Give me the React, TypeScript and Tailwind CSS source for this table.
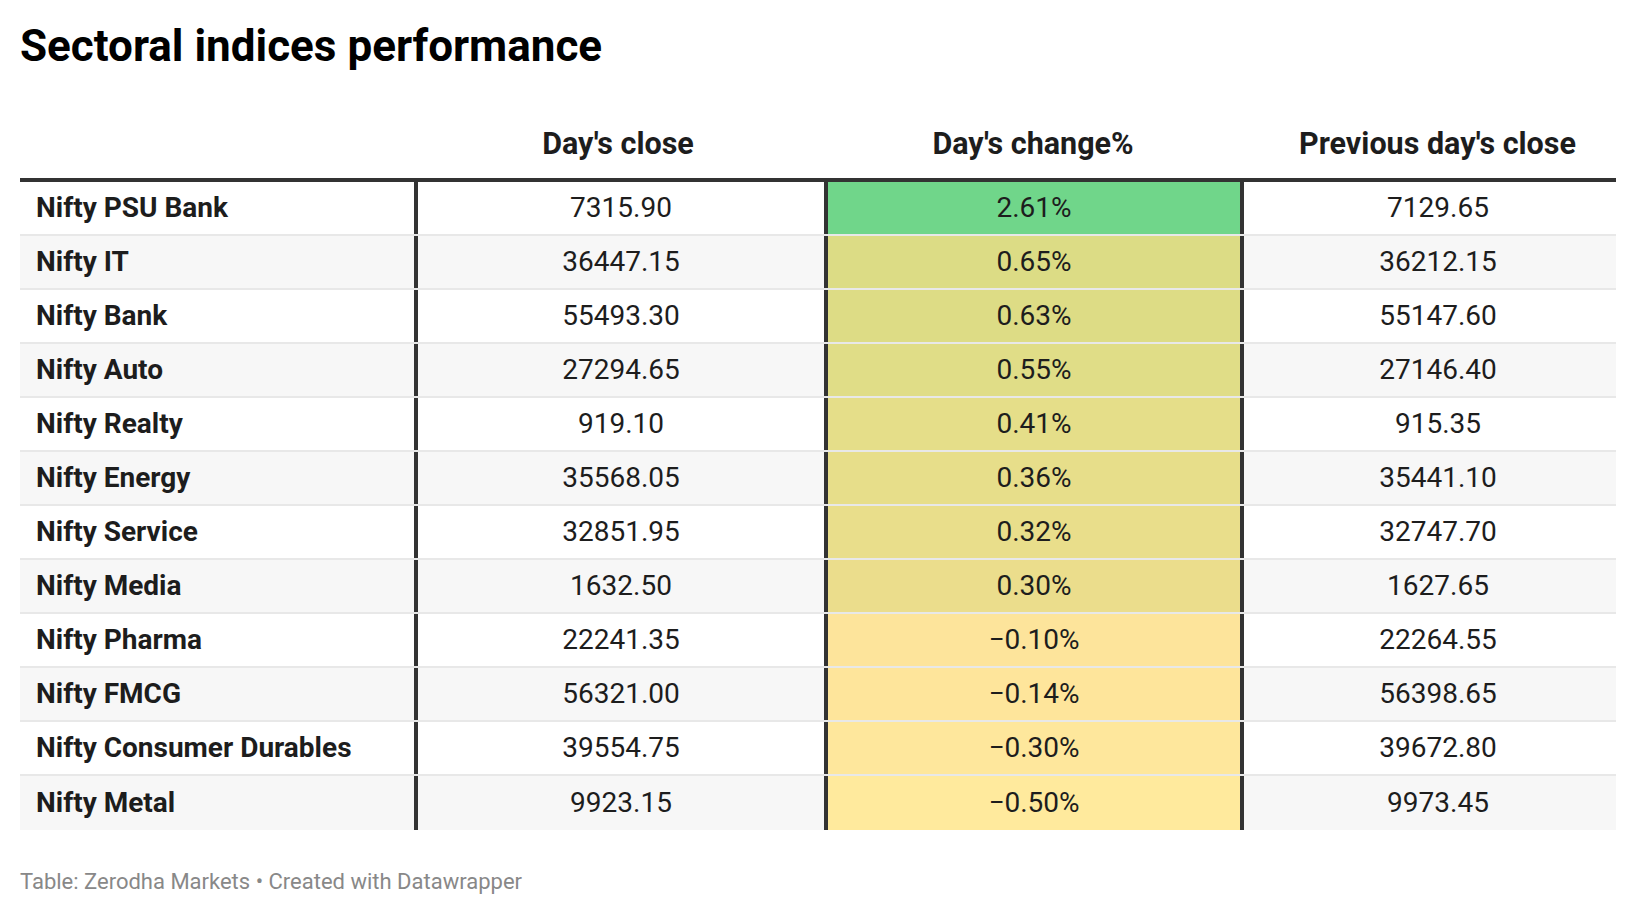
import React from "react";

type Row = { name: string; close: string; change: string; prev: string; bg: string };

const rows: Row[] = [
  { name: "Nifty PSU Bank", close: "7315.90", change: "2.61%", prev: "7129.65", bg: "#70d68a" },
  { name: "Nifty IT", close: "36447.15", change: "0.65%", prev: "36212.15", bg: "#dcdc85" },
  { name: "Nifty Bank", close: "55493.30", change: "0.63%", prev: "55147.60", bg: "#dddc85" },
  { name: "Nifty Auto", close: "27294.65", change: "0.55%", prev: "27146.40", bg: "#e0dd87" },
  { name: "Nifty Realty", close: "919.10", change: "0.41%", prev: "915.35", bg: "#e5de89" },
  { name: "Nifty Energy", close: "35568.05", change: "0.36%", prev: "35441.10", bg: "#e7de8a" },
  { name: "Nifty Service", close: "32851.95", change: "0.32%", prev: "32747.70", bg: "#e9de8b" },
  { name: "Nifty Media", close: "1632.50", change: "0.30%", prev: "1627.65", bg: "#ebdd8c" },
  { name: "Nifty Pharma", close: "22241.35", change: "\u22120.10%", prev: "22264.55", bg: "#fde49b" },
  { name: "Nifty FMCG", close: "56321.00", change: "\u22120.14%", prev: "56398.65", bg: "#fee59b" },
  { name: "Nifty Consumer Durables", close: "39554.75", change: "\u22120.30%", prev: "39672.80", bg: "#fee79c" },
  { name: "Nifty Metal", close: "9923.15", change: "\u22120.50%", prev: "9973.45", bg: "#ffea9d" },
];

export default function App() {
  return (
    <div
      className="w-[1636px] h-[914px] bg-white px-[20px] text-[#1d1d1d]"
      style={{ fontFamily: "Roboto, 'Liberation Sans', sans-serif" }}
    >
      <h1 className="pt-[20px] text-[44px] leading-[52px] font-bold text-black">Sectoral indices performance</h1>
      <div className="mt-[46px] flex h-[60px] items-center pb-[8px] text-[30.5px] font-bold">
        <div className="w-[393px]"></div>
        <div className="w-[410px] text-center">Day's close</div>
        <div className="w-[420px] text-center">Day's change%</div>
        <div className="flex-1 pl-[16px] text-center">Previous day's close</div>
      </div>
      <div className="border-t-4 border-[#333333]">
        {rows.map((r, i) => (
          <div
            key={r.name}
            className={`flex h-[54px] text-[28px] ${i % 2 === 1 ? "bg-[#f7f7f7]" : "bg-white"} ${
              i < rows.length - 1 ? "border-b-2 border-[#e8e8e8]" : "h-[52px]"
            }`}
          >
            <div className="flex w-[394px] items-center pl-[16px] font-bold">{r.name}</div>
            <div className="flex w-[410px] items-center justify-center border-l-4 border-[#333333]">{r.close}</div>
            <div className="flex w-[420px] items-center justify-center border-x-4 border-[#333333]" style={{ backgroundColor: r.bg }}>
              {r.change}
            </div>
            <div className="flex flex-1 items-center justify-center pl-[16px]">{r.prev}</div>
          </div>
        ))}
      </div>
      <div className="mt-[35px] text-[22px] text-[#888888]">Table: Zerodha Markets • Created with Datawrapper</div>
    </div>
  );
}
